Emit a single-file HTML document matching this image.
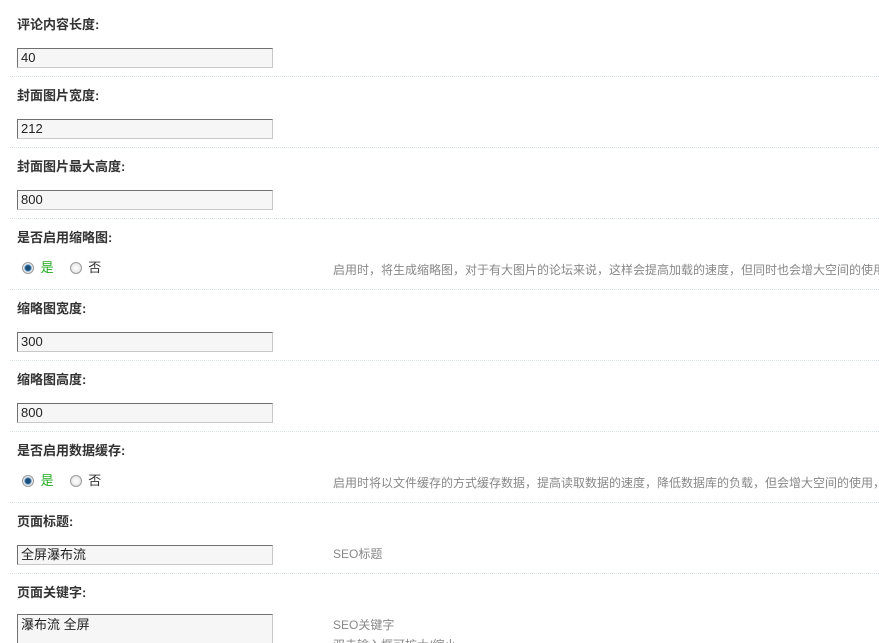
<!DOCTYPE html>
<html style="overflow:hidden;height:643px"><head><meta charset="utf-8"><style>
body{margin:0;width:879px;height:643px;overflow:hidden;background:#fff;font-family:"Liberation Sans","Noto Sans CJK SC",sans-serif;position:relative}
.l{position:absolute;left:17px;font-size:13px;font-weight:bold;color:#333;line-height:15px}
.i{position:absolute;left:17px;border:1px solid;border-color:#707070 #c8c8c8 #c8c8c8 #707070;background:#f6f6f6;font-size:13px;color:#222;line-height:18px;padding-left:3px;box-sizing:border-box;width:256px;height:20px}
.hr{position:absolute;left:10px;right:0;border-top:1px dotted #d8e4e8}
.d{position:absolute;left:333px;font-size:12px;color:#888;white-space:nowrap;line-height:14px}
.r{position:absolute;left:22px;font-size:13px;line-height:14px;color:#333}
.rb{display:inline-block;width:10px;height:10px;border-radius:50%;border:1px solid #999;background:radial-gradient(#fff,#ddd);vertical-align:-2px}
.rb.on{background:radial-gradient(#1a4d7a 35%,#6a9ccc 45%,#eee 60%)}
</style></head><body>
<div class="l" style="top:17px">评论内容长度:</div>
<div class="i" style="top:48px">40</div>
<div class="hr" style="top:76px"></div>
<div class="l" style="top:88px">封面图片宽度:</div>
<div class="i" style="top:119px">212</div>
<div class="hr" style="top:147px"></div>
<div class="l" style="top:159px">封面图片最大高度:</div>
<div class="i" style="top:190px">800</div>
<div class="hr" style="top:218px"></div>
<div class="l" style="top:230px">是否启用缩略图:</div>
<div class="r" style="top:261px"><span class="rb on"></span> <span style="color:#2a2;margin-left:3px">是</span><span class="rb" style="margin-left:16px"></span> <span style="margin-left:3px">否</span></div>
<div class="d" style="top:263px">启用时，将生成缩略图，对于有大图片的论坛来说，这样会提高加载的速度，但同时也会增大空间的使用</div>
<div class="hr" style="top:289px"></div>
<div class="l" style="top:301px">缩略图宽度:</div>
<div class="i" style="top:332px">300</div>
<div class="hr" style="top:360px"></div>
<div class="l" style="top:372px">缩略图高度:</div>
<div class="i" style="top:403px">800</div>
<div class="hr" style="top:431px"></div>
<div class="l" style="top:443px">是否启用数据缓存:</div>
<div class="r" style="top:474px"><span class="rb on"></span> <span style="color:#2a2;margin-left:3px">是</span><span class="rb" style="margin-left:16px"></span> <span style="margin-left:3px">否</span></div>
<div class="d" style="top:476px">启用时将以文件缓存的方式缓存数据，提高读取数据的速度，降低数据库的负载，但会增大空间的使用，</div>
<div class="hr" style="top:502px"></div>
<div class="l" style="top:514px">页面标题:</div>
<div class="i" style="top:545px">全屏瀑布流</div>
<div class="d" style="top:547px">SEO标题</div>
<div class="hr" style="top:573px"></div>
<div class="l" style="top:585px">页面关键字:</div>
<div class="i" style="top:614px;height:60px;line-height:20px">瀑布流 全屏</div>
<div class="d" style="top:618px">SEO关键字</div>
<div class="d" style="top:638px">双击输入框可扩大/缩小</div>
</body></html>
